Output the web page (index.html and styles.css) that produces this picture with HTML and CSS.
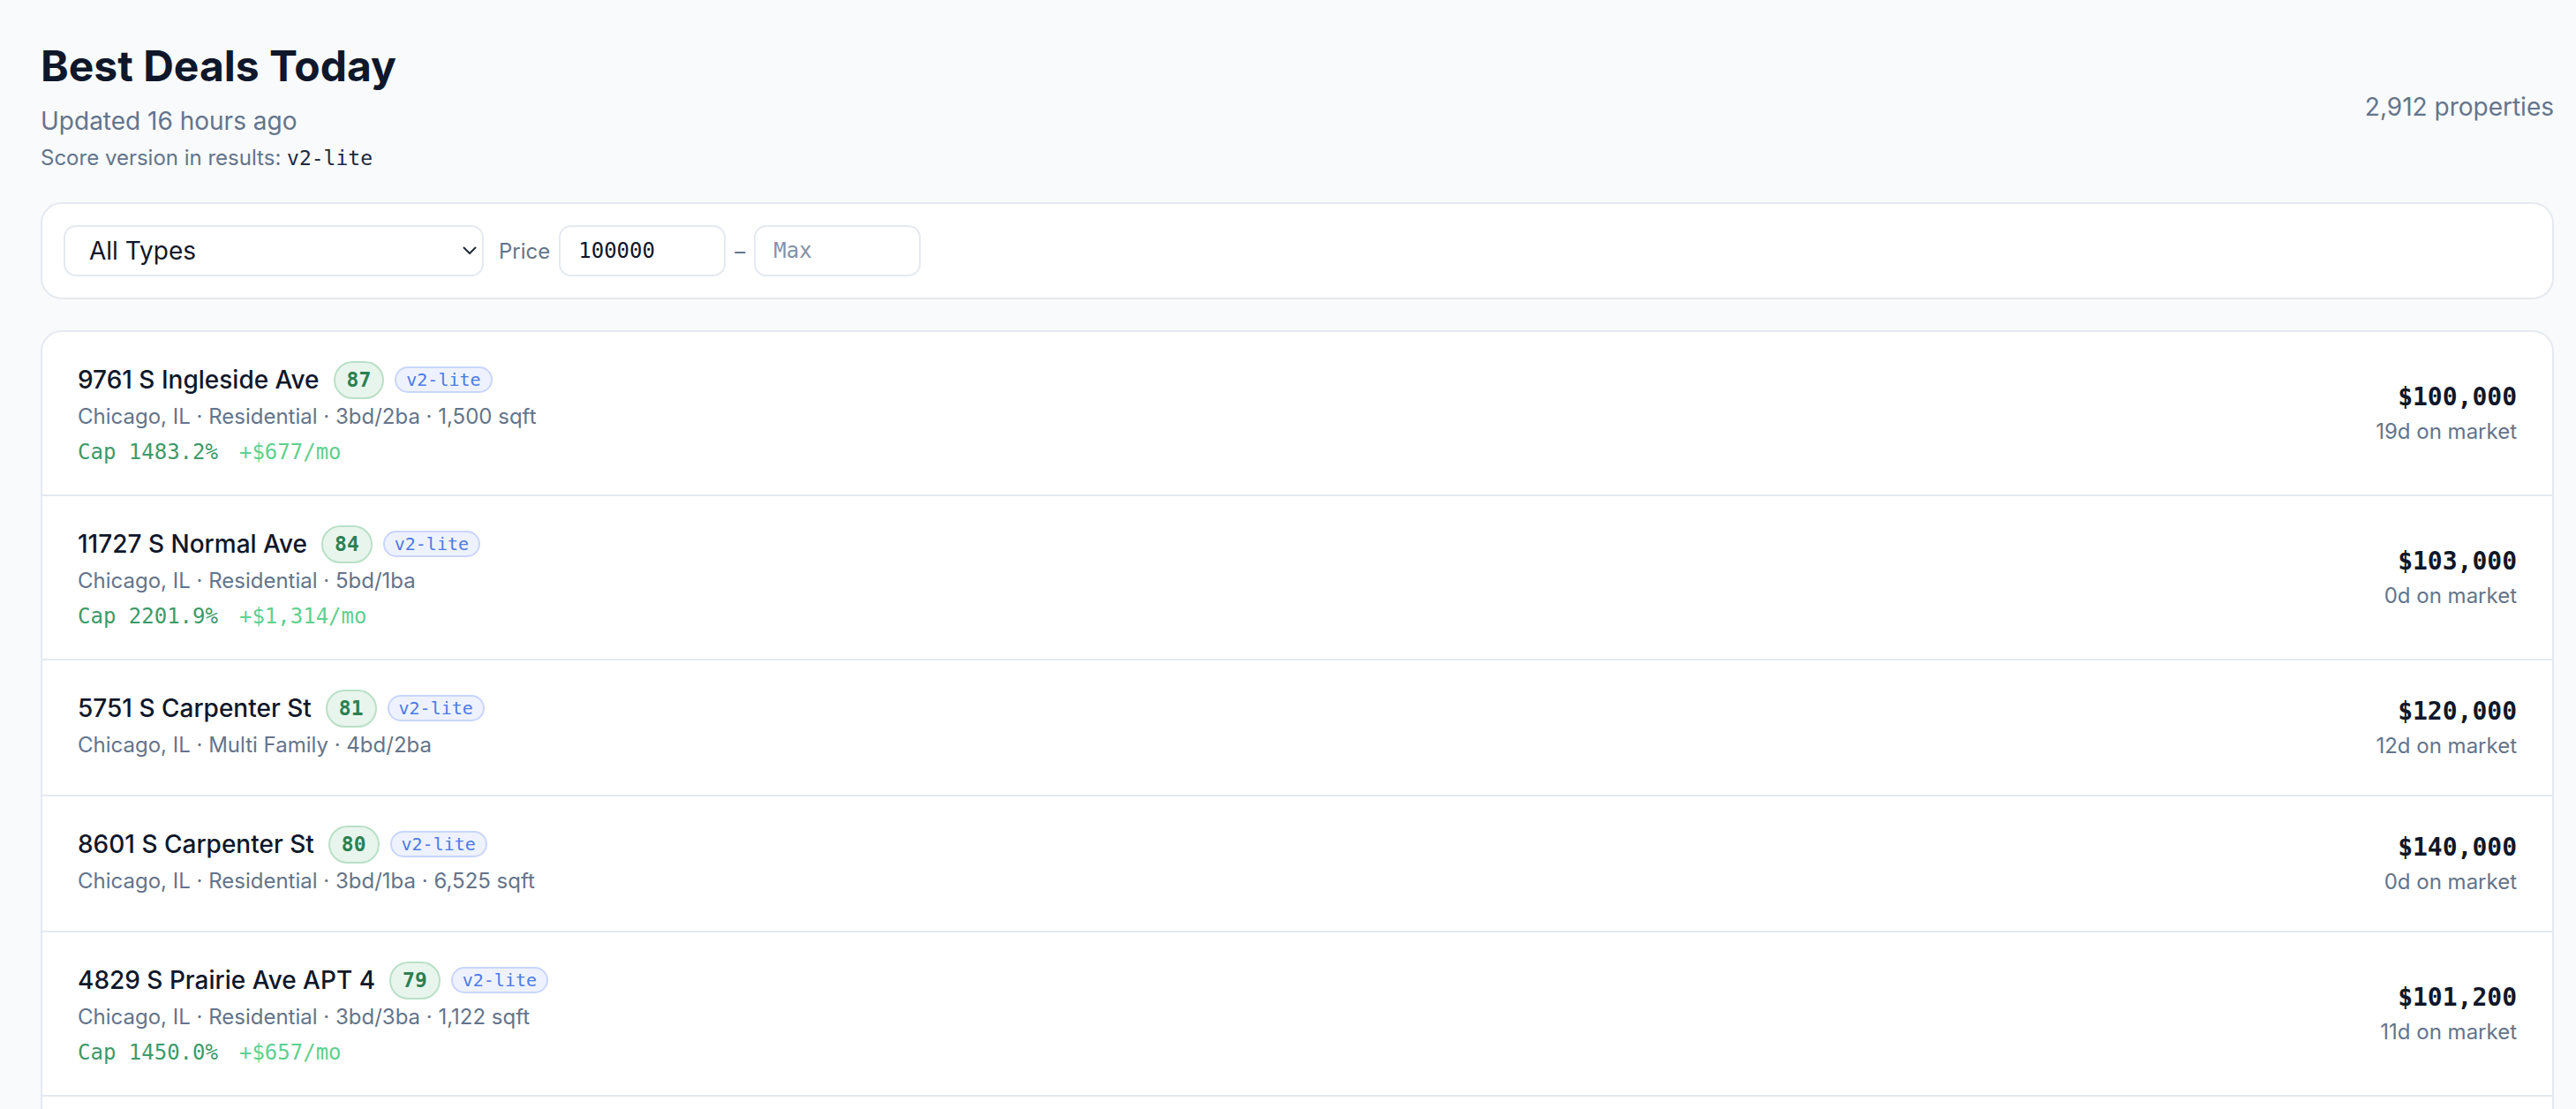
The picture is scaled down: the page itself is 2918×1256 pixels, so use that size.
FILE: index.html
```html
<!DOCTYPE html>
<html lang="en">
<head>
    <meta charset="UTF-8">
    <meta name="viewport" content="width=device-width, initial-scale=1.0">
    <title>Best Deals Today</title>
    <link rel="stylesheet" href="styles.css">
</head>
<body>

    <main class="page">

        <!-- Header -->
        <header class="page-head">
            <div>
                <h1>Best Deals Today</h1>
                <p class="updated">Updated 16 hours ago</p>
                <p class="score-version">Score version in results: <code>v2-lite</code></p>
            </div>
            <div class="count">2,912 properties</div>
        </header>

        <!-- Filters -->
        <section class="filters">
            <div class="select-wrap">
                <select class="type-select">
                    <option>All Types</option>
                    <option>Residential</option>
                    <option>Multi Family</option>
                </select>
                <svg class="chevron" width="16" height="10" viewBox="0 0 16 10">
                    <path d="M1.5 1.5 L8 8 L14.5 1.5" fill="none" stroke="#1e293b" stroke-width="2" stroke-linecap="round" stroke-linejoin="round"/>
                </svg>
            </div>
            <div class="price-range">
                <span class="price-label">Price</span>
                <input type="text" class="price-input" value="100000">
                <span class="dash">–</span>
                <input type="text" class="price-input" placeholder="Max">
            </div>
        </section>

        <!-- Deals list -->
        <section class="deals">
            <div class="deal">
                <div class="deal-info">
                    <div class="deal-title">
                        <span class="address">9761 S Ingleside Ave</span>
                        <span class="score">87</span>
                        <span class="version">v2-lite</span>
                    </div>
                    <p class="meta">Chicago, IL · Residential · 3bd/2ba · 1,500 sqft</p>
                    <p class="returns"><span class="cap">Cap 1483.2%</span><span class="cash">+$677/mo</span></p>
                </div>
                <div class="deal-price">
                    <div class="price">$100,000</div>
                    <div class="days">19d on market</div>
                </div>
            </div>

            <div class="deal">
                <div class="deal-info">
                    <div class="deal-title">
                        <span class="address">11727 S Normal Ave</span>
                        <span class="score">84</span>
                        <span class="version">v2-lite</span>
                    </div>
                    <p class="meta">Chicago, IL · Residential · 5bd/1ba</p>
                    <p class="returns"><span class="cap">Cap 2201.9%</span><span class="cash">+$1,314/mo</span></p>
                </div>
                <div class="deal-price">
                    <div class="price">$103,000</div>
                    <div class="days">0d on market</div>
                </div>
            </div>

            <div class="deal">
                <div class="deal-info">
                    <div class="deal-title">
                        <span class="address">5751 S Carpenter St</span>
                        <span class="score">81</span>
                        <span class="version">v2-lite</span>
                    </div>
                    <p class="meta">Chicago, IL · Multi Family · 4bd/2ba</p>
                </div>
                <div class="deal-price">
                    <div class="price">$120,000</div>
                    <div class="days">12d on market</div>
                </div>
            </div>

            <div class="deal">
                <div class="deal-info">
                    <div class="deal-title">
                        <span class="address">8601 S Carpenter St</span>
                        <span class="score">80</span>
                        <span class="version">v2-lite</span>
                    </div>
                    <p class="meta">Chicago, IL · Residential · 3bd/1ba · 6,525 sqft</p>
                </div>
                <div class="deal-price">
                    <div class="price">$140,000</div>
                    <div class="days">0d on market</div>
                </div>
            </div>

            <div class="deal">
                <div class="deal-info">
                    <div class="deal-title">
                        <span class="address">4829 S Prairie Ave APT 4</span>
                        <span class="score">79</span>
                        <span class="version">v2-lite</span>
                    </div>
                    <p class="meta">Chicago, IL · Residential · 3bd/3ba · 1,122 sqft</p>
                    <p class="returns"><span class="cap">Cap 1450.0%</span><span class="cash">+$657/mo</span></p>
                </div>
                <div class="deal-price">
                    <div class="price">$101,200</div>
                    <div class="days">11d on market</div>
                </div>
            </div>

            <div class="deal">
                <div class="deal-info">
                    <div class="deal-title">
                        <span class="address">7122 S Morgan St</span>
                        <span class="score">78</span>
                        <span class="version">v2-lite</span>
                    </div>
                    <p class="meta">Chicago, IL · Residential · 4bd/2ba</p>
                </div>
                <div class="deal-price">
                    <div class="price">$115,000</div>
                    <div class="days">6d on market</div>
                </div>
            </div>
        </section>

    </main>

</body>
</html>
```

FILE: styles.css
```css
/* Global Styles */
* {
    margin: 0;
    padding: 0;
    box-sizing: border-box;
}

body {
    font-family: 'Inter', 'Liberation Sans', sans-serif;
    background-color: #f8fafc;
    color: #0f172a;
}

code, input, .score, .version, .returns, .price {
    font-family: 'DejaVu Sans Mono', monospace;
}

.page {
    padding: 46px 25px 40px 46px;
}

/* Header */
.page-head {
    display: flex;
    justify-content: space-between;
    align-items: center;
}

.page-head h1 {
    font-size: 48px;
    line-height: 58px;
    font-weight: 700;
    color: #0f172a;
}

.updated {
    margin-top: 13px;
    font-size: 28px;
    line-height: 40px;
    color: #64748b;
}

.score-version {
    margin-top: 6px;
    font-size: 24px;
    line-height: 32px;
    color: #64748b;
}

.score-version code {
    font-size: 23px;
    color: #1e293b;
}

.count {
    font-size: 28px;
    line-height: 40px;
    color: #64748b;
}

/* Filters */
.filters {
    margin-top: 34px;
    background-color: #fff;
    border: 2px solid #e5e9f0;
    border-radius: 24px;
    padding: 24px;
    display: flex;
    align-items: center;
    gap: 17px;
}

.select-wrap {
    position: relative;
    width: 476px;
}

.type-select {
    appearance: none;
    -webkit-appearance: none;
    width: 100%;
    height: 58px;
    padding: 0 50px 0 27px;
    font-family: 'Inter', sans-serif;
    font-size: 28px;
    color: #0f172a;
    background-color: #fff;
    border: 2px solid #e5e9f0;
    border-radius: 14px;
}

.chevron {
    position: absolute;
    right: 8px;
    top: 24px;
    pointer-events: none;
}

.price-range {
    display: flex;
    align-items: center;
    gap: 10px;
}

.price-label, .dash {
    font-size: 24px;
    color: #64748b;
}

.price-input {
    width: 189px;
    height: 58px;
    padding: 0 20px;
    font-size: 24px;
    color: #0f172a;
    background-color: #fff;
    border: 2px solid #e5e9f0;
    border-radius: 14px;
}

.price-input::placeholder {
    color: #8391a7;
}

/* Deals list */
.deals {
    margin-top: 35px;
    background-color: #fff;
    border: 2px solid #e5e9f0;
    border-radius: 24px;
    overflow: hidden;
}

.deal {
    display: flex;
    justify-content: space-between;
    align-items: center;
    padding: 32px 40px 38px 40px;
    border-top: 2px solid #e5e9f0;
}

.deal:first-child {
    border-top: none;
}

.deal-title {
    display: flex;
    align-items: center;
    height: 44px;
}

.address {
    font-size: 28px;
    font-weight: 500;
    color: #0f172a;
    margin-right: 16px;
}

.score {
    height: 43px;
    padding: 0 13px;
    font-size: 23px;
    line-height: 39px;
    font-weight: 700;
    color: #2c8052;
    background-color: #e8f5ed;
    border: 2px solid #b9e0c8;
    border-radius: 22px;
    margin-right: 12px;
}

.version {
    height: 30px;
    padding: 0 11px;
    font-size: 20px;
    line-height: 26px;
    color: #4a7be3;
    background-color: #eef2ff;
    border: 2px solid #c9d6fb;
    border-radius: 16px;
}

.meta {
    margin-top: 2px;
    font-size: 24px;
    line-height: 36px;
    color: #64748b;
}

.returns {
    margin-top: 12px;
    font-size: 24px;
    line-height: 20px;
    display: flex;
    gap: 24px;
}

.cap {
    color: #3d9a69;
}

.cash {
    color: #5fd08f;
}

.deal-price {
    padding-top: 4px;
    text-align: right;
}

.price {
    font-size: 28px;
    line-height: 40px;
    font-weight: 700;
    color: #0f172a;
}

.days {
    margin-top: 3px;
    font-size: 24px;
    line-height: 32px;
    color: #64748b;
}
```
